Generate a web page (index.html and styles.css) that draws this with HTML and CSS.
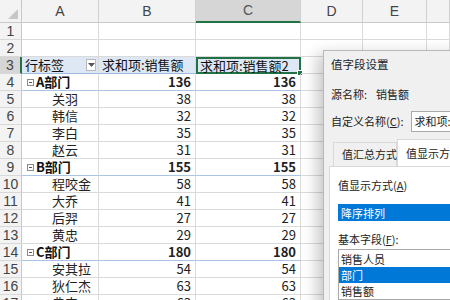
FILE: index.html
```html
<!DOCTYPE html>
<html lang="zh-CN">
<head>
<meta charset="utf-8">
<link rel="stylesheet" href="styles.css">
</head>
<body>
<div class="sheet">
  <div class="corner"><span class="tri"></span></div>
  <div class="ch">A</div><div class="ch">B</div><div class="ch csel">C</div><div class="ch">D</div><div class="ch">E</div><div class="ch"></div>

  <div class="rh">1</div><div class="c"></div><div class="c"></div><div class="c"></div><div class="c"></div><div class="c"></div><div class="c"></div>
  <div class="rh">2</div><div class="c"></div><div class="c"></div><div class="c"></div><div class="c"></div><div class="c"></div><div class="c"></div>

  <div class="rh rsel">3</div>
  <div class="c ph">行标签<span class="dd"><svg width="7" height="4" viewBox="0 0 7 4"><path d="M0 0h7L3.5 4z" fill="#555"/></svg></span></div>
  <div class="c ph">求和项:销售额</div>
  <div class="c ph active">求和项:销售额2<span class="handle"></span></div>
  <div class="c"></div><div class="c"></div><div class="c"></div>

  <div class="rh">4</div><div class="c dept"><span class="minus"></span>A部门</div><div class="c num dept">136</div><div class="c num dept">136</div><div class="c"></div><div class="c"></div><div class="c"></div>
  <div class="rh">5</div><div class="c name">关羽</div><div class="c num">38</div><div class="c num">38</div><div class="c"></div><div class="c"></div><div class="c"></div>
  <div class="rh">6</div><div class="c name">韩信</div><div class="c num">32</div><div class="c num">32</div><div class="c"></div><div class="c"></div><div class="c"></div>
  <div class="rh">7</div><div class="c name">李白</div><div class="c num">35</div><div class="c num">35</div><div class="c"></div><div class="c"></div><div class="c"></div>
  <div class="rh">8</div><div class="c name">赵云</div><div class="c num">31</div><div class="c num">31</div><div class="c"></div><div class="c"></div><div class="c"></div>
  <div class="rh">9</div><div class="c dept"><span class="minus"></span>B部门</div><div class="c num dept">155</div><div class="c num dept">155</div><div class="c"></div><div class="c"></div><div class="c"></div>
  <div class="rh">10</div><div class="c name">程咬金</div><div class="c num">58</div><div class="c num">58</div><div class="c"></div><div class="c"></div><div class="c"></div>
  <div class="rh">11</div><div class="c name">大乔</div><div class="c num">41</div><div class="c num">41</div><div class="c"></div><div class="c"></div><div class="c"></div>
  <div class="rh">12</div><div class="c name">后羿</div><div class="c num">27</div><div class="c num">27</div><div class="c"></div><div class="c"></div><div class="c"></div>
  <div class="rh">13</div><div class="c name">黄忠</div><div class="c num">29</div><div class="c num">29</div><div class="c"></div><div class="c"></div><div class="c"></div>
  <div class="rh">14</div><div class="c dept"><span class="minus"></span>C部门</div><div class="c num dept">180</div><div class="c num dept">180</div><div class="c"></div><div class="c"></div><div class="c"></div>
  <div class="rh">15</div><div class="c name">安其拉</div><div class="c num">54</div><div class="c num">54</div><div class="c"></div><div class="c"></div><div class="c"></div>
  <div class="rh">16</div><div class="c name">狄仁杰</div><div class="c num">63</div><div class="c num">63</div><div class="c"></div><div class="c"></div><div class="c"></div>
  <div class="rh">17</div><div class="c name">典韦</div><div class="c num">63</div><div class="c num">63</div><div class="c"></div><div class="c"></div><div class="c"></div>
</div>

<div class="dialog">
  <div class="title">值字段设置</div>
  <div class="line src"><span>源名称:</span><span class="srcval">销售额</span></div>
  <div class="line custom"><span>自定义名称(<u>C</u>):</span><span class="input">求和项:销售额2</span></div>
  <div class="tabs">
    <div class="tab">值汇总方式</div>
    <div class="tab on">值显示方式</div>
  </div>
  <div class="panel">
    <div class="lbl">值显示方式(<u>A</u>)</div>
    <div class="select">降序排列</div>
    <div class="lbl lbl2">基本字段(<u>F</u>):</div>
    <div class="list">
      <div class="item">销售人员</div>
      <div class="item hi">部门</div>
      <div class="item">销售额</div>
    </div>
  </div>
</div>
</body>
</html>
```

FILE: styles.css
```css
* { box-sizing: border-box; }
html, body { margin: 0; padding: 0; }
body {
  width: 450px;
  height: 300px;
  overflow: hidden;
  background: #fff;
  position: relative;
  font-family: "Noto Sans CJK SC", "Liberation Sans", sans-serif;
  color: #222;
}

.sheet {
  display: grid;
  grid-template-columns: 22px 77px 97px 105px 62px 64px 1fr;
  grid-template-rows: 23px;
  grid-auto-rows: 17px;
  font-size: 13px;
}

.corner {
  background: #f3f3f3;
  border-right: 1px solid #c8c8c8;
  border-bottom: 1px solid #c8c8c8;
  position: relative;
}
.corner .tri {
  position: absolute;
  right: 3px;
  bottom: 3px;
  width: 0;
  height: 0;
  border-left: 10px solid transparent;
  border-bottom: 10px solid #c6c6c6;
}

.ch {
  background: #f3f3f3;
  border-right: 1px solid #d0d0d0;
  border-bottom: 1px solid #c8c8c8;
  text-align: center;
  line-height: 22px;
  font-family: "Liberation Sans", sans-serif;
  font-size: 14px;
  color: #444;
}
.ch.csel {
  background: #d6d6d6;
  border-bottom: 2px solid #217346;
  color: #555;
  line-height: 21px;
}

.rh {
  background: #f3f3f3;
  border-right: 1px solid #c8c8c8;
  border-bottom: 1px solid #d8d8d8;
  text-align: center;
  line-height: 17px;
  font-family: "Liberation Sans", sans-serif;
  font-size: 14px;
  color: #444;
}
.rh.rsel {
  background: #d6d6d6;
  border-right: 2px solid #217346;
}

.c {
  border-right: 1px solid #dadada;
  border-bottom: 1px solid #dadada;
  line-height: 16px;
  white-space: nowrap;
  overflow: visible;
  position: relative;
}

.ph {
  background: #dde8f4;
  padding-left: 3px;
  color: #111;
  border-bottom-color: #9dbbe0;
}
.ph .dd {
  position: absolute;
  right: 2px;
  top: 2px;
  width: 10px;
  height: 12px;
  background: #fff;
  border: 1px solid #b8b8b8;
  display: flex;
  align-items: center;
  justify-content: center;
}
.ph.active {
  border: 2px solid #217346;
  line-height: 14px;
  padding-left: 2px;
}
.handle {
  position: absolute;
  right: -4px;
  bottom: -4px;
  width: 6px;
  height: 6px;
  background: #217346;
  border: 1px solid #fff;
}

.dept {
  font-weight: bold;
  color: #111;
  border-bottom-color: #a9c4e4;
  display: flex;
  align-items: center;
  padding-left: 5px;
}
.num.dept { justify-content: flex-end; padding-right: 4px; }
.minus {
  width: 7px;
  height: 7px;
  border: 1px solid #8a8a8a;
  margin-right: 2px;
  position: relative;
  background: #fff;
}
.minus::after {
  content: "";
  position: absolute;
  left: 1px;
  right: 1px;
  top: 2px;
  height: 1px;
  background: #555;
}
.name { padding-left: 30px; color: #222; }
.num { text-align: right; padding-right: 4px; color: #222; }

/* dialog */
.dialog {
  position: absolute;
  left: 323px;
  top: 50px;
  width: 150px;
  height: 262px;
  background: #f0f0f0;
  border: 1px solid #b9b9b9;
  box-shadow: -6px 4px 14px rgba(0, 0, 0, 0.22);
  font-size: 11px;
  color: #222;
  padding-left: 7px;
}
.title {
  height: 26px;
  line-height: 26px;
  font-size: 11.5px;
}
.line {
  display: flex;
  align-items: center;
  white-space: nowrap;
}
.src { height: 34px; }
.srcval { margin-left: 9px; }
.custom { height: 20px; }
.input {
  margin-left: 7px;
  height: 21px;
  line-height: 19px;
  border: 1px solid #a9a9a9;
  background: #fff;
  padding-left: 3px;
  flex: 1;
}
.tabs {
  display: flex;
  align-items: flex-end;
  margin-top: 8px;
  margin-left: 2px;
  height: 27px;
}
.tab {
  height: 24px;
  line-height: 23px;
  padding: 0 8px;
  border: 1px solid #d9d9d9;
  border-bottom: none;
  background: #f0f0f0;
  width: 64px;
  white-space: nowrap;
}
.tab.on {
  height: 27px;
  line-height: 26px;
  background: #fff;
  width: 70px;
}
.panel {
  background: #fff;
  border: 1px solid #d9d9d9;
  margin-left: -2px;
  padding-left: 8px;
  height: 150px;
}
.lbl { height: 18px; line-height: 18px; margin-top: 9px; white-space: nowrap; }
.select {
  margin-top: 10px;
  height: 17px;
  line-height: 16px;
  background: #0078d7;
  color: #fff;
  padding-left: 2px;
  border: 1px solid #0078d7;
}
.lbl2 { margin-top: 9px; }
.list {
  margin-top: 1px;
  border: 1px solid #a9a9a9;
  background: #fff;
  padding-top: 1px;
}
.item { height: 16px; line-height: 16px; padding-left: 2px; }
.item.hi { background: #0078d7; color: #fff; }
```
